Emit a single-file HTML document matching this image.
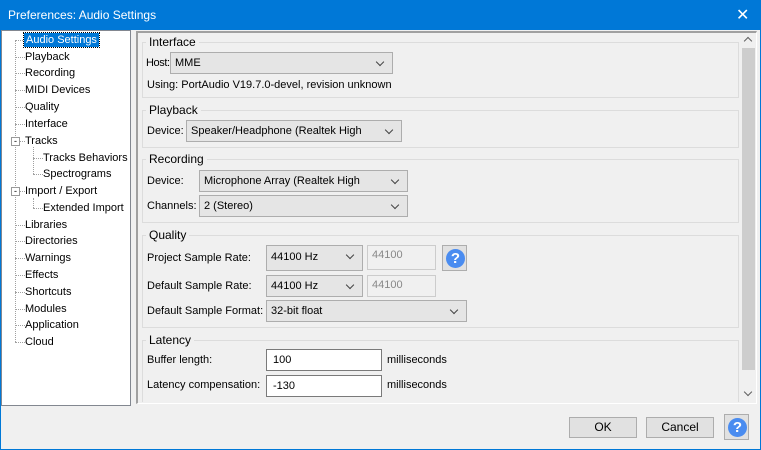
<!DOCTYPE html>
<html><head><meta charset="utf-8"><style>
*{box-sizing:border-box;margin:0;padding:0}
body{width:761px;height:450px;overflow:hidden;background:#f0f0f0;font-family:"Liberation Sans",sans-serif;font-size:11px;color:#000;position:relative}
.a{position:absolute;white-space:nowrap}
.title{left:0;top:0;width:761px;height:30px;background:#0078d7;color:#fff;font-size:12px;padding:8px 0 0 8px}
.win{left:0;top:0;width:761px;height:450px;border:1px solid #0078d7;pointer-events:none}
.tree{left:1px;top:30px;width:130px;height:376px;background:#fff;border:1px solid #828790}
.ti{position:absolute;line-height:14px}
.dl{position:absolute;border-top:1px dotted #a0a0a0;width:10px}
.vl{position:absolute;border-left:1px dotted #a0a0a0}
.panel{left:136px;top:31px;width:621px;height:373px;border-top:2px solid #a0a0a0;border-left:2px solid #a0a0a0;border-right:1px solid #fff;border-bottom:1px solid #fff}
.grp{position:absolute;border:1px solid #dcdcdc;left:142px;width:597px}
.gl{position:absolute;background:#f0f0f0;padding:0 3px;left:146px}
.cb{position:absolute;background:#e5e5e5;border:1px solid #adadad;padding:4px 0 0 4px}
.cb::after{content:"";position:absolute;right:9px;top:6px;width:5px;height:5px;border-right:1px solid #444;border-bottom:1px solid #444;transform:rotate(45deg)}
.tb{position:absolute;background:#f0f0f0;border:1px solid #ccc;color:#888;padding:3px 0 0 4px}
.in{position:absolute;background:#fff;border:1px solid #7a7a7a;padding:4px 0 0 6px}
.hb{position:absolute;border:1px solid #adadad;background:#e1e1e1}
.hb span{position:absolute;left:3px;top:3px;width:19px;height:19px;border-radius:50%;background:#4a8cf0;color:#fff;font-weight:bold;font-size:15px;text-align:center;line-height:19px}
.btn{position:absolute;background:#e1e1e1;border:1px solid #adadad;text-align:center;line-height:19px;font-size:12px}
</style></head><body>
<div class="a title">Preferences: Audio Settings</div>
<div class="a" style="left:736px;top:5px;color:#fff;font-size:16px">✕</div>

<div class="a tree"></div>
<div class="vl" style="left:15px;top:40px;height:302px"></div>
<div class="vl" style="left:33px;top:147px;height:27px"></div>
<div class="vl" style="left:33px;top:198px;height:10px"></div>
<div class="dl" style="left:15px;top:40px"></div><div class="ti" style="left:24px;top:33px;background:#0078d7;color:#fff;padding:0 2px;outline:1px dotted #000">Audio Settings</div>
<div class="dl" style="left:15px;top:57px"></div><div class="ti" style="left:25px;top:50px">Playback</div>
<div class="dl" style="left:15px;top:73px"></div><div class="ti" style="left:25px;top:66px">Recording</div>
<div class="dl" style="left:15px;top:90px"></div><div class="ti" style="left:25px;top:83px">MIDI Devices</div>
<div class="dl" style="left:15px;top:107px"></div><div class="ti" style="left:25px;top:100px">Quality</div>
<div class="dl" style="left:15px;top:124px"></div><div class="ti" style="left:25px;top:117px">Interface</div>
<div class="dl" style="left:15px;top:141px"></div><div class="ti" style="left:25px;top:134px">Tracks</div>
<div class="dl" style="left:33px;top:158px"></div><div class="ti" style="left:43px;top:151px">Tracks Behaviors</div>
<div class="dl" style="left:33px;top:174px"></div><div class="ti" style="left:43px;top:167px">Spectrograms</div>
<div class="dl" style="left:15px;top:191px"></div><div class="ti" style="left:25px;top:184px">Import / Export</div>
<div class="dl" style="left:33px;top:208px"></div><div class="ti" style="left:43px;top:201px">Extended Import</div>
<div class="dl" style="left:15px;top:225px"></div><div class="ti" style="left:25px;top:218px">Libraries</div>
<div class="dl" style="left:15px;top:241px"></div><div class="ti" style="left:25px;top:234px">Directories</div>
<div class="dl" style="left:15px;top:258px"></div><div class="ti" style="left:25px;top:251px">Warnings</div>
<div class="dl" style="left:15px;top:275px"></div><div class="ti" style="left:25px;top:268px">Effects</div>
<div class="dl" style="left:15px;top:292px"></div><div class="ti" style="left:25px;top:285px">Shortcuts</div>
<div class="dl" style="left:15px;top:309px"></div><div class="ti" style="left:25px;top:302px">Modules</div>
<div class="dl" style="left:15px;top:325px"></div><div class="ti" style="left:25px;top:318px">Application</div>
<div class="dl" style="left:15px;top:342px"></div><div class="ti" style="left:25px;top:335px">Cloud</div>
<div class="a" style="left:11px;top:137px;width:9px;height:9px;border:1px solid #999;background:#fff;font-size:9px;line-height:6px;text-align:center">-</div>
<div class="a" style="left:11px;top:187px;width:9px;height:9px;border:1px solid #999;background:#fff;font-size:9px;line-height:6px;text-align:center">-</div>

<div class="a panel"></div>
<div class="a" style="left:741px;top:33px;width:15px;height:370px;background:#f0f0f0"></div>
<div class="a" style="left:742px;top:48px;width:13px;height:322px;background:#cdcdcd"></div>
<div class="a" style="left:745px;top:38px;width:6px;height:6px;border-left:1.5px solid #606060;border-top:1.5px solid #606060;transform:rotate(45deg)"></div>
<div class="a" style="left:745px;top:389px;width:6px;height:6px;border-right:1.5px solid #606060;border-bottom:1.5px solid #606060;transform:rotate(45deg)"></div>

<div class="grp" style="top:42px;height:56px"></div><div class="gl a" style="top:35px;font-size:12px">Interface</div>
<div class="a" style="left:146px;top:57px;letter-spacing:-0.4px">Host:</div>
<div class="cb" style="left:170px;top:52px;width:223px;height:22px">MME</div>
<div class="a" style="left:147px;top:79px">Using: PortAudio V19.7.0-devel, revision unknown</div>

<div class="grp" style="top:110px;height:38px"></div><div class="gl a" style="top:103px;font-size:12px">Playback</div>
<div class="a" style="left:147px;top:125px">Device:</div>
<div class="cb" style="left:186px;top:120px;width:216px;height:22px">Speaker/Headphone (Realtek High</div>

<div class="grp" style="top:159px;height:64px"></div><div class="gl a" style="top:152px;font-size:12px">Recording</div>
<div class="a" style="left:147px;top:175px">Device:</div>
<div class="cb" style="left:199px;top:170px;width:209px;height:22px">Microphone Array (Realtek High</div>
<div class="a" style="left:147px;top:200px">Channels:</div>
<div class="cb" style="left:199px;top:195px;width:209px;height:22px">2 (Stereo)</div>

<div class="grp" style="top:235px;height:93px"></div><div class="gl a" style="top:228px;font-size:12px">Quality</div>
<div class="a" style="left:147px;top:252px">Project Sample Rate:</div>
<div class="cb" style="left:266px;top:245px;width:97px;height:26px;padding-top:5px">44100 Hz</div>
<div class="tb" style="left:367px;top:245px;width:69px;height:25px">44100</div>
<div class="hb" style="left:442px;top:245px;width:25px;height:26px"><span>?</span></div>
<div class="a" style="left:147px;top:280px">Default Sample Rate:</div>
<div class="cb" style="left:266px;top:275px;width:97px;height:22px">44100 Hz</div>
<div class="tb" style="left:367px;top:275px;width:69px;height:22px">44100</div>
<div class="a" style="left:147px;top:305px">Default Sample Format:</div>
<div class="cb" style="left:266px;top:300px;width:201px;height:22px">32-bit float</div>

<div class="grp" style="top:340px;height:62px;border-bottom:none"></div><div class="gl a" style="top:333px;font-size:12px">Latency</div>
<div class="a" style="left:147px;top:354px">Buffer length:</div>
<div class="in" style="left:266px;top:349px;width:116px;height:22px">100</div>
<div class="a" style="left:387px;top:354px">milliseconds</div>
<div class="a" style="left:147px;top:379px">Latency compensation:</div>
<div class="in" style="left:266px;top:375px;width:116px;height:22px">-130</div>
<div class="a" style="left:387px;top:379px">milliseconds</div>

<div class="btn" style="left:569px;top:417px;width:68px;height:21px">OK</div>
<div class="btn" style="left:646px;top:417px;width:68px;height:21px">Cancel</div>
<div class="hb" style="left:724px;top:414px;width:25px;height:26px"><span>?</span></div>
<div class="a win"></div>
</body></html>
